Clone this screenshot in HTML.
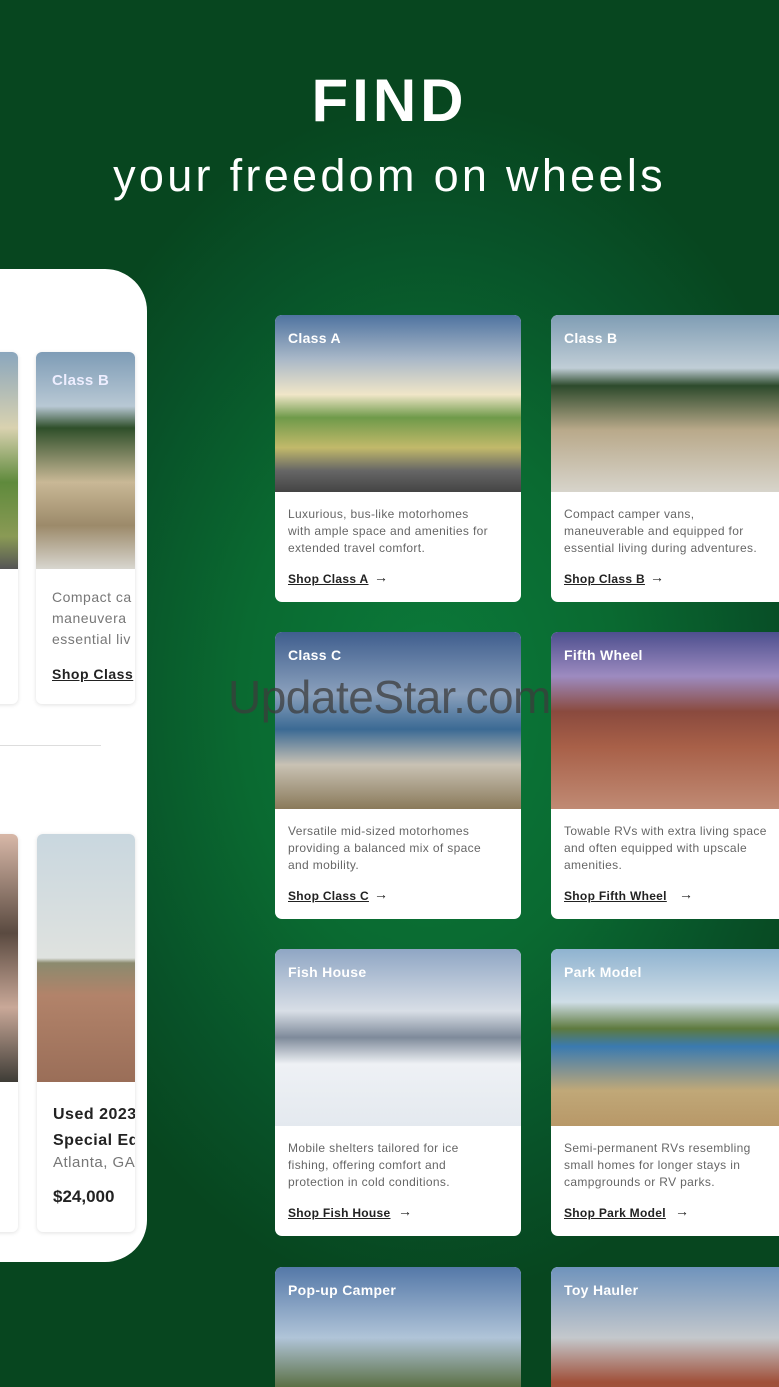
<!DOCTYPE html>
<html><head><meta charset="utf-8"><style>
*{margin:0;padding:0;box-sizing:border-box}
html,body{width:779px;height:1387px;overflow:hidden}
body{position:relative;font-family:"Liberation Sans",sans-serif;
background:radial-gradient(ellipse 420px 600px at 430px 700px,#0b7a3a 0%,#0a6a31 45%,#085128 80%,#07461f 100%);}
.h1{position:absolute;top:66px;left:0;width:779px;text-align:center;color:#fff;font-weight:bold;font-size:60px;letter-spacing:4px}
.h2{position:absolute;top:150px;left:0;width:779px;text-align:center;color:#fff;font-size:45px;letter-spacing:3.3px}
.card{position:absolute;width:246px;height:287px;background:#fff;border-radius:7px;overflow:hidden}
.img{height:177px;position:relative}
.t{position:absolute;left:13px;top:15px;color:#fff;font-weight:bold;font-size:14px;letter-spacing:.3px}
.d{padding:14px 0 0 13px;font-size:12px;line-height:17px;color:#666;letter-spacing:.35px;white-space:nowrap}
.s{position:absolute;left:13px;top:257px;font-size:12px;font-weight:bold;color:#222;text-decoration:underline;letter-spacing:.3px}
.a{position:absolute;top:254px;font-size:14px;font-weight:bold;color:#222}
.phone{position:absolute;left:-60px;top:269px;width:207px;height:993px;background:#fff;border-radius:0 42px 42px 0}
.mc{position:absolute;background:#fff;border-radius:6px;box-shadow:0 1px 4px rgba(0,0,0,.12);overflow:hidden}
</style></head><body>
<div class="h1">FIND</div>
<div class="h2">your freedom on wheels</div>

<div class="phone"></div>
<div class="mc" style="left:-20px;top:352px;width:38px;height:352px"><div style="height:217px;background:linear-gradient(#8aa6bd,#d9d2b0 35%,#5f8a3c 60%,#8a9a55 85%,#555 100%)"></div></div>
<div class="mc" style="left:36px;top:352px;width:99px;height:352px">
<div style="height:217px;background:linear-gradient(#7e9cb6,#b8c8d4 25%,#2f4f2a 35%,#c9b896 60%,#9c8a6a 80%,#d8d6cf 100%);position:relative"><span class="t" style="left:16px;top:20px;font-size:15px;color:#eef">Class B</span></div>
<div style="padding:18px 0 0 16px;font-size:14px;line-height:21px;color:#777;white-space:nowrap;letter-spacing:.5px">Compact ca<br>maneuvera<br>essential liv</div>
<div style="padding:16px 0 0 16px;font-size:14px;font-weight:bold;color:#222;text-decoration:underline;white-space:nowrap;letter-spacing:.5px">Shop Class</div></div>
<div style="position:absolute;left:0;top:745px;width:101px;height:1px;background:#ddd"></div>
<div class="mc" style="left:-20px;top:834px;width:38px;height:398px"><div style="height:248px;background:linear-gradient(#d8b8a8,#5a4a40 40%,#c9a898 70%,#3e3c36)"></div></div>
<div class="mc" style="left:37px;top:834px;width:98px;height:398px">
<div style="height:248px;background:linear-gradient(#c9d7df,#dfe2df 50%,#8b8a6e 52%,#b2836a 65%,#9a6e58 100%)"></div>
<div style="padding:20px 0 0 16px;font-size:16px;line-height:26px;font-weight:bold;color:#222;white-space:nowrap;letter-spacing:.5px">Used 2023<br>Special Ed</div>
<div style="padding:0 0 0 16px;font-size:15px;color:#777;white-space:nowrap;letter-spacing:.5px">Atlanta, GA</div>
<div style="padding:16px 0 0 16px;font-size:17px;font-weight:bold;color:#222">$24,000</div></div>

<div class="card" style="left:275px;top:315px"><div class="img" style="background:linear-gradient(#4f73a0,#a9b8c8 25%,#f0e6c8 45%,#6f9a4a 58%,#c2b96a 75%,#666 88%,#444)"><span class="t">Class A</span></div>
<div class="d">Luxurious, bus-like motorhomes<br>with ample space and amenities for<br>extended travel comfort.</div><div class="s">Shop Class A</div><span class="a" style="left:99px">→</span></div>
<div class="card" style="left:551px;top:315px;width:240px"><div class="img" style="background:linear-gradient(#7f9db4,#c0cdd6 30%,#2d4a2c 40%,#b9a98a 65%,#d7d4cb 100%)"><span class="t">Class B</span></div>
<div class="d">Compact camper vans,<br>maneuverable and equipped for<br>essential living during adventures.</div><div class="s">Shop Class B</div><span class="a" style="left:99px">→</span></div>

<div class="card" style="left:275px;top:632px"><div class="img" style="background:linear-gradient(#3f5e8e,#8aa0bc 35%,#3b6a94 55%,#c9c2b4 75%,#8a7a5a 100%)"><span class="t">Class C</span></div>
<div class="d">Versatile mid-sized motorhomes<br>providing a balanced mix of space<br>and mobility.</div><div class="s">Shop Class C</div><span class="a" style="left:99px">→</span></div>
<div class="card" style="left:551px;top:632px;width:240px"><div class="img" style="background:linear-gradient(#4d4f8e,#9d8bc0 25%,#8a4a3e 45%,#a86048 65%,#c08a74 100%)"><span class="t">Fifth Wheel</span></div>
<div class="d">Towable RVs with extra living space<br>and often equipped with upscale<br>amenities.</div><div class="s">Shop Fifth Wheel</div><span class="a" style="left:128px">→</span></div>

<div class="card" style="left:275px;top:949px"><div class="img" style="background:linear-gradient(#8fa6c4,#d8dee6 35%,#7e8a9a 50%,#eef1f5 65%,#e4e9ef 100%)"><span class="t">Fish House</span></div>
<div class="d">Mobile shelters tailored for ice<br>fishing, offering comfort and<br>protection in cold conditions.</div><div class="s">Shop Fish House</div><span class="a" style="left:123px">→</span></div>
<div class="card" style="left:551px;top:949px;width:240px"><div class="img" style="background:linear-gradient(#8fb3d0,#cfdde6 30%,#5e7a3e 45%,#3a7ab0 55%,#c0a878 80%,#b89868 100%)"><span class="t">Park Model</span></div>
<div class="d">Semi-permanent RVs resembling<br>small homes for longer stays in<br>campgrounds or RV parks.</div><div class="s">Shop Park Model</div><span class="a" style="left:124px">→</span></div>

<div class="card" style="left:275px;top:1267px;height:120px;border-radius:7px 7px 0 0"><div class="img" style="background:linear-gradient(#5478a8,#b0c4d8 40%,#556a3a 70%,#4a6a8a)"><span class="t">Pop-up Camper</span></div></div>
<div class="card" style="left:551px;top:1267px;width:240px;height:120px;border-radius:7px 7px 0 0"><div class="img" style="background:linear-gradient(#6f93bc,#c4c8cc 40%,#a0503a 65%,#8a6040)"><span class="t">Toy Hauler</span></div></div>

<div style="position:absolute;left:228px;top:670px;font-size:46px;color:rgba(60,60,60,.75);letter-spacing:-0.5px">UpdateStar.com</div>
</body></html>
